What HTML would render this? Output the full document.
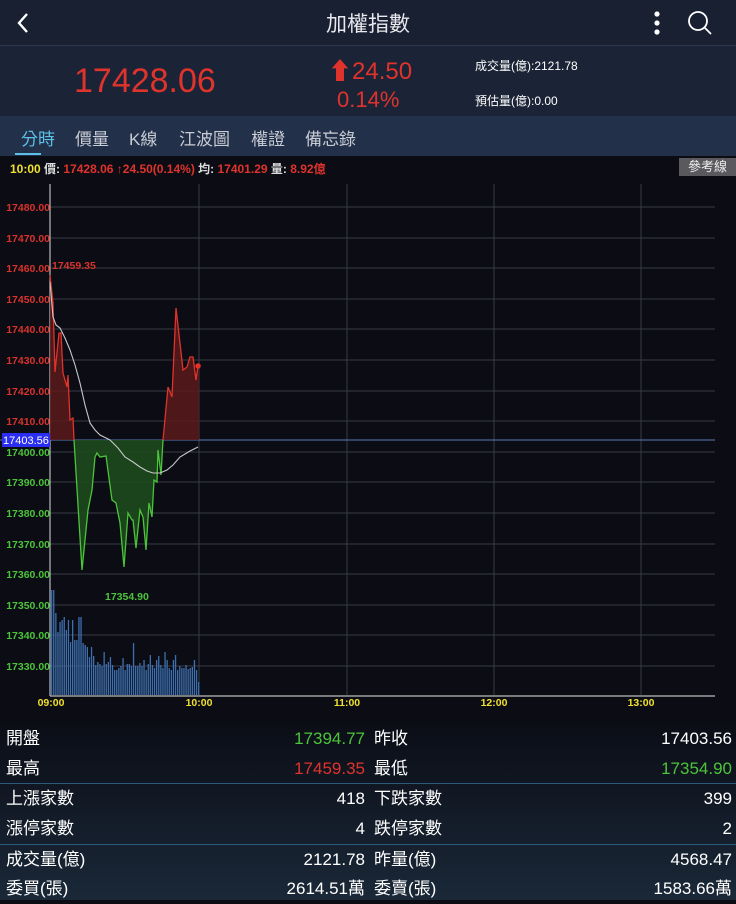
<!DOCTYPE html>
<html><head><meta charset="utf-8"><style>
*{margin:0;padding:0;box-sizing:border-box}
body{width:736px;height:900px;background:#0b0c14;font-family:"Liberation Sans","Noto Sans CJK TC",sans-serif;overflow:hidden;position:relative;color:#fff}
.abs{position:absolute;white-space:nowrap}
#top{left:0;top:0;width:736px;height:46px;background:#182031;border-bottom:1px solid #2c3850}
#quote{left:0;top:46px;width:736px;height:70px;background:#1b2436}
#tabs{left:0;top:116px;width:736px;height:40px;background:#23304a}
#tbl{left:0;top:722px;width:736px;height:178px;background:linear-gradient(#0b0d16,#1a2838)}
.row{position:absolute;left:0;width:736px;height:30px;font-size:17px;line-height:30px}
.row span{position:absolute}
</style></head><body>
<div id="top" class="abs"></div>
<svg class="abs" style="left:12px;top:10px" width="20" height="26"><path d="M15 4 L7 13 L15 22" stroke="#fff" stroke-width="2.4" fill="none"/></svg>
<div class="abs" style="left:0;width:736px;text-align:center;top:8px;font-size:21px;color:#e8e8ee">加權指數</div>
<svg class="abs" style="left:650px;top:10px" width="14" height="26"><circle cx="7" cy="4" r="2.6" fill="#fff"/><circle cx="7" cy="13" r="2.6" fill="#fff"/><circle cx="7" cy="22" r="2.6" fill="#fff"/></svg>
<svg class="abs" style="left:686px;top:9px" width="28" height="28"><circle cx="12" cy="12" r="9" stroke="#fff" stroke-width="1.8" fill="none"/><path d="M18.5 18.5 L25 25" stroke="#fff" stroke-width="1.8"/></svg>
<div id="quote" class="abs"></div>
<div class="abs" style="left:74px;top:62px;font-size:34px;color:#e0332c">17428.06</div>
<div class="abs" style="left:328px;top:51px;font-size:24px;color:#e0332c">⬆24.50</div>
<div class="abs" style="left:337px;top:87px;font-size:22px;color:#e0332c">0.14%</div>
<div class="abs" style="left:475px;top:57px;font-size:12px;color:#fff">成交量(億):2121.78</div>
<div class="abs" style="left:475px;top:92px;font-size:12px;color:#fff">預估量(億):0.00</div>
<div id="tabs" class="abs"></div>
<div class="abs" style="left:21px;top:125px;font-size:17px;color:#5cc0e8">分時</div>
<div class="abs" style="left:15px;top:153px;width:26px;height:2px;background:#5cc0e8"></div>
<div class="abs" style="left:75px;top:125px;font-size:17px;color:#c8ccd4">價量</div>
<div class="abs" style="left:129px;top:125px;font-size:17px;color:#c8ccd4">K線</div>
<div class="abs" style="left:179px;top:125px;font-size:17px;color:#c8ccd4">江波圖</div>
<div class="abs" style="left:251px;top:125px;font-size:17px;color:#c8ccd4">權證</div>
<div class="abs" style="left:305px;top:125px;font-size:17px;color:#c8ccd4">備忘錄</div>
<div class="abs" style="left:10px;top:160px;font-size:12px;font-weight:bold;color:#e0332c"><span style="color:#f0e030">10:00</span> <span style="color:#ddd">價:</span> 17428.06 ↑24.50(0.14%) <span style="color:#ddd">均:</span> 17401.29 <span style="color:#ddd">量:</span> 8.92億</div>
<div class="abs" style="left:679px;top:158px;width:57px;height:18px;background:#5a5a5e;font-size:13px;line-height:18px;text-align:center;color:#eee">參考線</div>

<svg class="abs" style="left:0;top:0" width="736" height="722">
<defs>
<clipPath id="up"><rect x="0" y="0" width="736" height="440"/></clipPath>
<clipPath id="dn"><rect x="0" y="440" width="736" height="300"/></clipPath>
</defs>
<g stroke="#3a3c46" stroke-width="1">
<line x1="50" y1="207" x2="715" y2="207"/><line x1="50" y1="238" x2="715" y2="238"/><line x1="50" y1="268" x2="715" y2="268"/><line x1="50" y1="299" x2="715" y2="299"/><line x1="50" y1="329" x2="715" y2="329"/><line x1="50" y1="360" x2="715" y2="360"/><line x1="50" y1="391" x2="715" y2="391"/><line x1="50" y1="421" x2="715" y2="421"/><line x1="50" y1="452" x2="715" y2="452"/><line x1="50" y1="482" x2="715" y2="482"/><line x1="50" y1="513" x2="715" y2="513"/><line x1="50" y1="544" x2="715" y2="544"/><line x1="50" y1="574" x2="715" y2="574"/><line x1="50" y1="605" x2="715" y2="605"/><line x1="50" y1="635" x2="715" y2="635"/><line x1="50" y1="666" x2="715" y2="666"/>
<line x1="199" y1="184" x2="199" y2="695"/><line x1="347" y1="184" x2="347" y2="695"/><line x1="494" y1="184" x2="494" y2="695"/><line x1="641" y1="184" x2="641" y2="695"/>
</g>
<line x1="50" y1="184" x2="50" y2="696" stroke="#bbb" stroke-width="1.2"/>
<line x1="50" y1="696" x2="715" y2="696" stroke="#bbb" stroke-width="1.2"/>
<line x1="0" y1="440" x2="715" y2="440" stroke="#5a7ab8" stroke-width="1"/>
<g fill="#3d6fb0" id="bars"></g>
<polygon clip-path="url(#up)" fill="#5a1a1a" opacity=".85" points="50,440 50,275 53,303 55,372 59,333 61,333 63,373 67,387 68,375 70,420 73,418 74,440 82,570 88,510 92,490 95,457 97,453 100,457 106,456 112,500 116,503 120,523 124,567 128,513 132,520 133,520 136,548 140,510 143,517 146,550 149,503 152,517 154,480 157,482 158,450 161,475 163,440 168,387 172,397 176,308 183,370 187,367 190,357 193,357 196,380 198,366 199,366 199,440"/>
<polygon clip-path="url(#dn)" fill="#1d4a1d" opacity=".9" points="50,440 50,275 53,303 55,372 59,333 61,333 63,373 67,387 68,375 70,420 73,418 74,440 82,570 88,510 92,490 95,457 97,453 100,457 106,456 112,500 116,503 120,523 124,567 128,513 132,520 133,520 136,548 140,510 143,517 146,550 149,503 152,517 154,480 157,482 158,450 161,475 163,440 168,387 172,397 176,308 183,370 187,367 190,357 193,357 196,380 198,366 199,366 199,440"/>
<polyline clip-path="url(#up)" fill="none" stroke="#e0332c" stroke-width="1.3" points="50,275 53,303 55,372 59,333 61,333 63,373 67,387 68,375 70,420 73,418 74,440 82,570 88,510 92,490 95,457 97,453 100,457 106,456 112,500 116,503 120,523 124,567 128,513 132,520 133,520 136,548 140,510 143,517 146,550 149,503 152,517 154,480 157,482 158,450 161,475 163,440 168,387 172,397 176,308 183,370 187,367 190,357 193,357 196,380 198,366"/>
<polyline clip-path="url(#dn)" fill="none" stroke="#4cc43a" stroke-width="1.3" points="50,275 53,303 55,372 59,333 61,333 63,373 67,387 68,375 70,420 73,418 74,440 82,570 88,510 92,490 95,457 97,453 100,457 106,456 112,500 116,503 120,523 124,567 128,513 132,520 133,520 136,548 140,510 143,517 146,550 149,503 152,517 154,480 157,482 158,450 161,475 163,440 168,387 172,397 176,308 183,370 187,367 190,357 193,357 196,380 198,366"/>
<polyline fill="none" stroke="#c8c8c8" stroke-width="1.1" points="50,282 53,317 56,325 60,328 65,338 70,350 75,365 80,383 85,405 90,423 95,430 100,435 110,440 118,448 125,457 133,462 140,467 147,471 153,473 160,473 167,470 173,465 180,457 190,451 198,447"/>
<circle cx="198" cy="366" r="2.8" fill="#e0332c"/>
<g font-size="10.5" font-weight="bold" font-family="Liberation Sans,sans-serif">
<g fill="#d8332c" text-anchor="end"><text x="50" y="211">17480.00</text><text x="50" y="242">17470.00</text><text x="50" y="272">17460.00</text><text x="50" y="303">17450.00</text><text x="50" y="333">17440.00</text><text x="50" y="364">17430.00</text><text x="50" y="395">17420.00</text><text x="50" y="425">17410.00</text></g>
<g fill="#4cc43a" text-anchor="end"><text x="50" y="456">17400.00</text><text x="50" y="486">17390.00</text><text x="50" y="517">17380.00</text><text x="50" y="548">17370.00</text><text x="50" y="578">17360.00</text><text x="50" y="609">17350.00</text><text x="50" y="639">17340.00</text><text x="50" y="670">17330.00</text></g>
<text x="52" y="269" fill="#d8332c">17459.35</text>
<text x="105" y="600" fill="#4cc43a">17354.90</text>
<g fill="#f0e030" text-anchor="middle"><text x="51" y="706">09:00</text><text x="199" y="706">10:00</text><text x="347" y="706">11:00</text><text x="494" y="706">12:00</text><text x="641" y="706">13:00</text></g>
</g>
<rect x="2" y="433" width="48" height="14" fill="#2a2ef0"/>
<text x="3" y="444" font-size="11" fill="#fff" font-family="Liberation Sans,sans-serif">17403.56</text>
</svg>
<script>
var tops=[590,590,613,632,622,620,617,630,620,642,620,640,640,617,617,643,645,647,657,647,656,665,662,664,666,652,664,662,657,665,670,670,668,666,658,670,664,664,666,643,666,666,663,666,660,670,664,655,665,668,660,656,665,668,652,660,668,670,660,655,670,666,668,668,665,669,668,667,660,670,682];
var g=document.getElementById('bars'),s='';
for(var i=0;i<tops.length;i++){var x=51+i*2.1;s+='<rect x="'+x.toFixed(1)+'" y="'+tops[i]+'" width="1.3" height="'+(695-tops[i])+'"/>';}
g.innerHTML=s;
</script>

<div id="tbl" class="abs"></div>
<div class="row" style="top:724px"><span style="left:6px">開盤</span><span style="right:371px;color:#4cc43a">17394.77</span><span style="left:374px">昨收</span><span style="right:4px">17403.56</span></div>
<div class="row" style="top:754px"><span style="left:6px">最高</span><span style="right:371px;color:#e0332c">17459.35</span><span style="left:374px">最低</span><span style="right:4px;color:#4cc43a">17354.90</span></div>
<div class="abs" style="left:0;top:783px;width:736px;height:1px;background:#2d5a7a"></div>
<div class="row" style="top:784px"><span style="left:6px">上漲家數</span><span style="right:371px">418</span><span style="left:374px">下跌家數</span><span style="right:4px">399</span></div>
<div class="row" style="top:814px"><span style="left:6px">漲停家數</span><span style="right:371px">4</span><span style="left:374px">跌停家數</span><span style="right:4px">2</span></div>
<div class="abs" style="left:0;top:844px;width:736px;height:1px;background:#2d5a7a"></div>
<div class="row" style="top:845px"><span style="left:6px">成交量(億)</span><span style="right:371px">2121.78</span><span style="left:374px">昨量(億)</span><span style="right:4px">4568.47</span></div>
<div class="row" style="top:874px"><span style="left:6px">委買(張)</span><span style="right:371px">2614.51萬</span><span style="left:374px">委賣(張)</span><span style="right:4px">1583.66萬</span></div>
</body></html>
